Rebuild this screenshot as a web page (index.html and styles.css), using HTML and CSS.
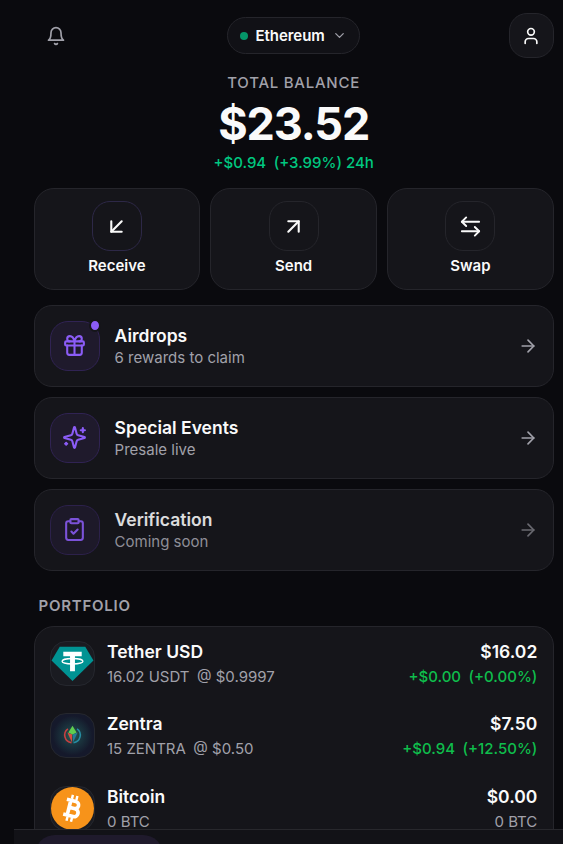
FILE: index.html
```html
<!DOCTYPE html>
<html lang="en">

<head>
    <meta charset="utf-8">
    <meta name="viewport" content="width=device-width, initial-scale=1.0">
    <title>Wallet</title>
    <link rel="stylesheet" href="styles.css">
</head>

<body>
    <div class="app">
        <header>
            <button class="bell" aria-label="Notifications">
                <svg class="icon" viewBox="0 0 24 24"><path d="M6 8a6 6 0 0 1 12 0c0 7 3 9 3 9H3s3-2 3-9"/><path d="M10.3 21a1.94 1.94 0 0 0 3.4 0"/></svg>
            </button>
            <button class="network">
                <span class="dot"></span>
                <span>Ethereum</span>
                <svg class="icon chevron" viewBox="0 0 24 24"><path d="m6 9 6 6 6-6"/></svg>
            </button>
            <button class="profile" aria-label="Profile">
                <svg class="icon" viewBox="0 0 24 24"><path d="M19 21v-2a4 4 0 0 0-4-4H9a4 4 0 0 0-4 4v2"/><circle cx="12" cy="7" r="4"/></svg>
            </button>
        </header>

        <section class="balance">
            <p class="label">TOTAL BALANCE</p>
            <h1>$23.52</h1>
            <p class="change"><span>+$0.94</span><span class="percent">(+3.99%)</span> 24h</p>
        </section>

        <section class="actions">
            <button class="action receive">
                <span class="tile"><svg class="icon" viewBox="0 0 24 24"><path d="M17 7 7 17"/><path d="M17 17H7V7"/></svg></span>
                Receive
            </button>
            <button class="action">
                <span class="tile"><svg class="icon" viewBox="0 0 24 24"><path d="M7 7h10v10"/><path d="M7 17 17 7"/></svg></span>
                Send
            </button>
            <button class="action">
                <span class="tile"><svg class="icon swap" viewBox="0 0 24 24"><path d="M7.500 2.500 3 7l4.500 4.500"/><path d="M3 7h18"/><path d="m16.500 12.500 4.500 4.500-4.500 4.500"/><path d="M21 17H3"/></svg></span>
                Swap
            </button>
        </section>

        <section class="links">
            <a class="link">
                <span class="tile">
                    <svg class="icon" viewBox="0 0 24 24"><rect x="3" y="8" width="18" height="4" rx="1"/><path d="M12 8v13"/><path d="M19 12v7a2 2 0 0 1-2 2H7a2 2 0 0 1-2-2v-7"/><path d="M7.500 8a2.500 2.500 0 0 1 0-5A4.800 8 0 0 1 12 8a4.800 8 0 0 1 4.500-5 2.500 2.500 0 0 1 0 5"/></svg>
                    <span class="badge"></span>
                </span>
                <span class="text">
                    <strong>Airdrops</strong>
                    <small>6 rewards to claim</small>
                </span>
                <svg class="icon arrow" viewBox="0 0 24 24"><path d="M5 12h14"/><path d="m12 5 7 7-7 7"/></svg>
            </a>
            <a class="link">
                <span class="tile">
                    <svg class="icon" viewBox="0 0 24 24"><path d="M9.937 15.500A2 2 0 0 0 8.500 14.063l-6.135-1.582a.5.5 0 0 1 0-.962L8.500 9.936A2 2 0 0 0 9.937 8.500l1.582-6.135a.5.5 0 0 1 .963 0L14.063 8.500A2 2 0 0 0 15.500 9.937l6.135 1.581a.5.5 0 0 1 0 .964L15.500 14.063a2 2 0 0 0-1.437 1.437l-1.582 6.135a.5.5 0 0 1-.963 0z"/><path d="M20 3v4"/><path d="M22 5h-4"/><path d="M4 17v2"/><path d="M5 18H3"/></svg>
                </span>
                <span class="text">
                    <strong>Special Events</strong>
                    <small>Presale live</small>
                </span>
                <svg class="icon arrow" viewBox="0 0 24 24"><path d="M5 12h14"/><path d="m12 5 7 7-7 7"/></svg>
            </a>
            <a class="link soon">
                <span class="tile">
                    <svg class="icon" viewBox="0 0 24 24"><rect x="8" y="2" width="8" height="4" rx="1"/><path d="M16 4h2a2 2 0 0 1 2 2v14a2 2 0 0 1-2 2H6a2 2 0 0 1-2-2V6a2 2 0 0 1 2-2h2"/><path d="m9 14 2 2 4-4"/></svg>
                </span>
                <span class="text">
                    <strong>Verification</strong>
                    <small>Coming soon</small>
                </span>
                <svg class="icon arrow" viewBox="0 0 24 24"><path d="M5 12h14"/><path d="m12 5 7 7-7 7"/></svg>
            </a>
        </section>

        <h2>PORTFOLIO</h2>
        <section class="portfolio">
            <article>
                <span class="coin">
                    <svg viewBox="0 0 44 44">
                        <path fill="#009393" d="M9.500 5.500h25L42.500 19 22 39 1.500 19z"/>
                        <path fill="#fff" d="M13 10.500h18v4.300h-6.600V29.500h-4.800V14.800H13z"/>
                        <ellipse cx="22" cy="19.800" rx="10.200" ry="2.700" fill="none" stroke="#fff" stroke-width="1.300"/>
                    </svg>
                </span>
                <div class="name"><h3>Tether USD</h3><p>16.02 USDT<span>@ $0.9997</span></p></div>
                <div class="value"><h3>$16.02</h3><p class="up">+$0.00<span>(+0.00%)</span></p></div>
            </article>
            <article>
                <span class="coin zentra">
                    <svg viewBox="0 0 44 44">
                        <path fill="none" stroke="#c83f40" stroke-width="1.500" d="M17.500 15.500a7.500 7.500 0 0 0 3.500 13.500"/>
                        <path fill="none" stroke="#278da3" stroke-width="1.500" d="M26.500 15.500a7.500 7.500 0 0 1-3.500 13.500"/>
                        <path fill="#d94b43" d="m17 19 4.600 2v8z"/>
                        <path fill="#247b9c" d="m27 19-4.600 2v8z"/>
                        <path fill="#5fce51" d="m22 12.500 4 6.500-4 2-4-2z"/>
                    </svg>
                </span>
                <div class="name"><h3>Zentra</h3><p>15 ZENTRA<span>@ $0.50</span></p></div>
                <div class="value"><h3>$7.50</h3><p class="up">+$0.94<span>(+12.50%)</span></p></div>
            </article>
            <article>
                <span class="coin">
                    <svg viewBox="0 0 44 44">
                        <circle cx="22" cy="22" r="21" fill="#f7931a"/>
                        <g transform="rotate(14 22 22)" fill="none" stroke="#fff">
                            <path stroke-width="3.600" d="M18.500 14.500v15M14.500 14.500h9a3.600 3.600 0 0 1 0 7.200h-5M23.500 21.700h1a3.900 3.900 0 0 1 0 7.800h-10"/>
                            <path stroke-width="2.400" d="M19.200 9v4M23.700 9v4M19.200 31v4M23.700 31v4"/>
                        </g>
                    </svg>
                </span>
                <div class="name"><h3>Bitcoin</h3><p>0 BTC</p></div>
                <div class="value"><h3>$0.00</h3><p>0 BTC</p></div>
            </article>
        </section>
    </div>

    <nav><span class="active"></span></nav>
</body>

</html>
```

FILE: styles.css
```css
* {
    box-sizing: border-box;
}

body {
    margin: 0;
    height: 844px;
    overflow: hidden;
    background-color: #0a0a0e;
    color: #fafafa;
    font-family: Inter, sans-serif;
}

h1, h2, h3, p {
    margin: 0;
}

button {
    padding: 0;
    border: none;
    background: none;
    color: inherit;
    font: inherit;
}

.app {
    padding: 13px 9.3px 0 33.6px;
}

.icon {
    display: block;
    width: 20px;
    height: 20px;
    fill: none;
    stroke: currentColor;
    stroke-width: 2;
    stroke-linecap: round;
    stroke-linejoin: round;
}

header {
    display: flex;
    align-items: center;
    justify-content: space-between;
    height: 45px;
}

.bell, .profile {
    display: grid;
    place-items: center;
    width: 45px;
    height: 45px;
}

.bell {
    color: #a1a1aa;
}

.profile {
    border: 1px solid #25252b;
    border-radius: 18px;
    background-color: #15151a;
}

.network {
    display: flex;
    align-items: center;
    gap: 7.5px;
    height: 37px;
    padding: 0 12px;
    border: 1px solid #25252b;
    border-radius: 19px;
    background-color: #111116;
    font-size: 15px;
    font-weight: 600;
    letter-spacing: -0.05px;
}

.dot {
    width: 8px;
    height: 8px;
    border-radius: 50%;
    background-color: #059669;
}

.chevron {
    width: 15px;
    height: 15px;
    color: #a1a1aa;
}

.balance {
    padding-top: 14px;
    text-align: center;
}

.label {
    color: #a1a1aa;
    font-size: 15px;
    font-weight: 500;
    line-height: 22px;
    letter-spacing: 0.75px;
}

h1 {
    margin-top: 5px;
    font-size: 45px;
    font-weight: 700;
    line-height: 50px;
    letter-spacing: -1.125px;
}

.change {
    margin-top: 3px;
    color: #00c880;
    font-size: 15px;
    font-weight: 500;
    line-height: 22px;
}

.percent {
    margin-left: 7.5px;
}

.actions {
    display: grid;
    grid-template-columns: repeat(3, 1fr);
    gap: 10px;
    margin-top: 14px;
}

.action {
    display: flex;
    flex-direction: column;
    align-items: center;
    gap: 4px;
    height: 102px;
    padding-top: 12px;
    border: 1px solid #25252b;
    border-radius: 20px;
    background-color: #15151a;
    font-size: 15px;
    font-weight: 600;
    line-height: 22px;
}

.tile {
    position: relative;
    display: grid;
    flex: none;
    place-items: center;
    width: 50px;
    height: 50px;
    border: 1px solid #25252b;
    border-radius: 18px;
}

.action .icon {
    width: 25px;
    height: 25px;
}

.receive .tile {
    border-color: #2d2847;
}

.action .swap {
    width: 23px;
    height: 23px;
}

.links {
    display: flex;
    flex-direction: column;
    gap: 10px;
    margin-top: 15px;
}

.link {
    display: flex;
    align-items: center;
    height: 82px;
    padding: 0 15px;
    border: 1px solid #25252b;
    border-radius: 18px;
    background-color: #15151a;
}

.link .tile {
    border-color: #302353;
    background-color: #1f1a2c;
    color: #8b5cf6;
}

.link .tile .icon {
    width: 25px;
    height: 25px;
    margin-top: -1px;
}

.badge {
    position: absolute;
    top: -3px;
    right: -2px;
    width: 12px;
    height: 13px;
    border: 2px solid #15151a;
    border-radius: 50%;
    background-color: #8b5cf6;
}

.text {
    flex: 1;
    margin-left: 15px;
}

.text strong, .text small {
    display: block;
}

.text strong {
    margin-top: -1px;
    font-size: 17.5px;
    font-weight: 600;
    line-height: 24px;
}

.text small {
    color: #a1a1aa;
    font-size: 15px;
    line-height: 20px;
}

.arrow {
    color: #a1a1aa;
}

.soon .tile, .soon .text {
    opacity: 0.87;
}

.soon .arrow {
    opacity: 0.6;
}

h2 {
    margin: 24px 0 10px 5px;
    color: #a1a1aa;
    font-size: 15px;
    font-weight: 600;
    line-height: 21px;
    letter-spacing: 0.75px;
}

.portfolio {
    display: flex;
    flex-direction: column;
    gap: 27.4px;
    height: 260px;
    padding: 14px 15.4px 14px 16px;
    border: 1px solid #25252b;
    border-radius: 20px;
    background-color: #15151a;
}

article {
    display: flex;
    align-items: center;
    height: 45px;
}

.coin {
    width: 45px;
    height: 45px;
    margin-left: -1px;
    border: 1px solid #25272e;
    border-radius: 16px;
    background-color: #1a1b21;
    overflow: hidden;
}

.coin svg {
    display: block;
    width: 45px;
    height: 45px;
    margin: -1px;
}

.zentra {
    background: radial-gradient(circle, #286451 0, #1b3740 28%, #15192b 65%);
}

.name {
    flex: 1;
    margin-left: 12.4px;
}

.value {
    text-align: right;
}

h3 {
    font-size: 17.5px;
    font-weight: 600;
    line-height: 26px;
}

article p {
    color: #a1a1aa;
    font-size: 15px;
    line-height: 23px;
}

article p span {
    margin-left: 7.5px;
}

article .up {
    color: #0fbd4c;
    font-weight: 500;
}

nav {
    position: fixed;
    left: 14px;
    right: 0;
    bottom: 0;
    height: 15px;
    padding: 5px 21px 0;
    border-top: 1px solid #28282d;
    background-color: #121217;
    overflow: hidden;
}

.active {
    display: block;
    width: 128px;
    height: 50px;
    border-radius: 20px;
    background-color: #1f1a2c;
}
```
